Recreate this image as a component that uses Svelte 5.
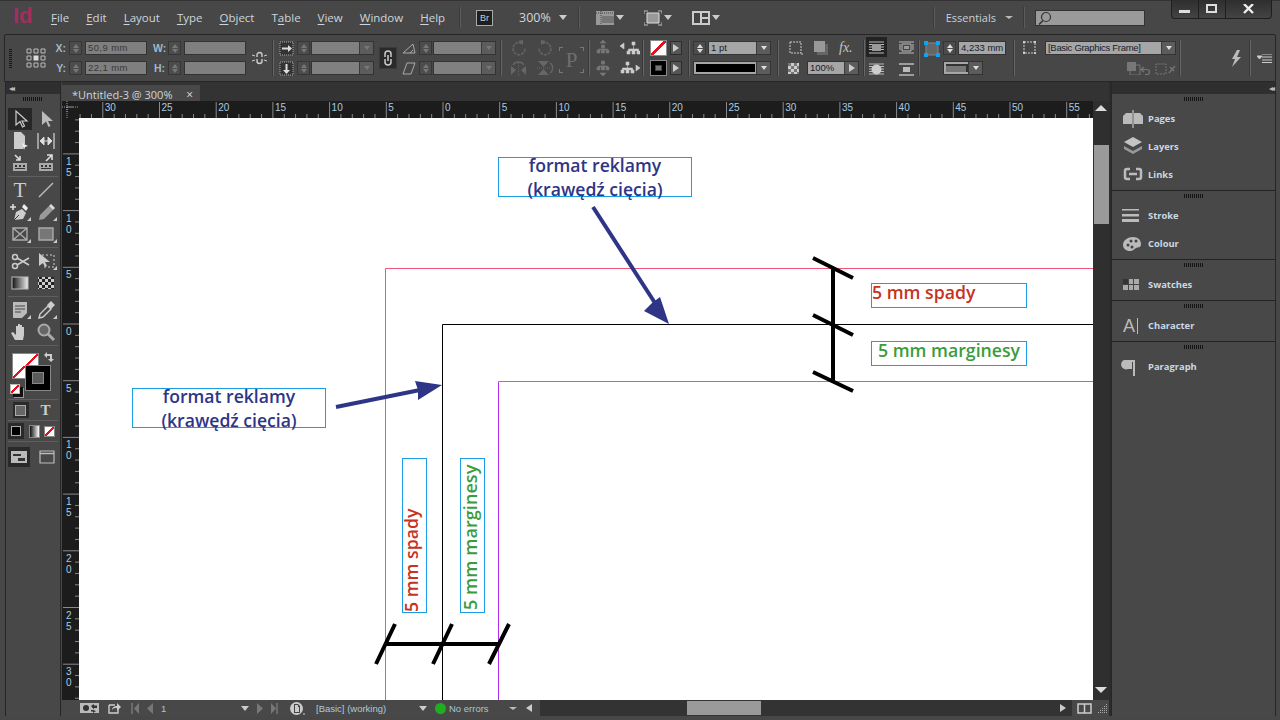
<script lang="ts">
  // accelerator letter sits in the middle: before, underlined, after
  const menus = [
    ['', 'F', 'ile'], ['', 'E', 'dit'], ['', 'L', 'ayout'], ['', 'T', 'ype'], ['', 'O', 'bject'],
    ['T', 'a', 'ble'], ['', 'V', 'iew'], ['', 'W', 'indow'], ['', 'H', 'elp'],
  ]

  // ruler ticks, 1 mm = 11.34 px, zero sits at the page corner
  const MM = 11.34
  const hTicks = Array.from({ length: 92 }, (_, i) => i - 33).map((mm) => ({
    mm,
    x: 381 + mm * MM,
    major: mm % 5 === 0,
  }))
  const vTicks = Array.from({ length: 52 }, (_, i) => i - 18).map((mm) => ({
    mm,
    y: 206 + mm * MM,
    major: mm % 5 === 0,
  }))

  const toolIcons: Record<string, string> = {
    select: '<path d="M6 2v14l4-3.5 2.5 5.5 2-1-2.5-5h5z" fill="none" stroke="#ccc" stroke-width="1.2"/>',
    direct: '<path d="M6 2v14l4-3.5 2.5 5.5 2-1-2.5-5h5z" fill="#bbb"/>',
    page: '<path d="M4 1h7l4 4v8h-2v5H4z" fill="#ccc"/><path d="M12 12l6 3-3 1-1 3z" fill="#eee"/>',
    gap: '<path d="M2 2v16M18 2v16" stroke="#bbb" stroke-width="1.5"/><path d="M4 10h12M4 10l4-4v8zM16 10l-4-4v8z" fill="#ddd" stroke="#ddd"/>',
    collect: '<path d="M3 10h14v8H3z" fill="#aaa"/><path d="M5 12h2v2H5zM9 12h2v2H9zM13 12h2v2h-2zM5 15h10v1H5z" fill="#333"/><path d="M5 2l5 5M10 3v4H6" stroke="#ddd" stroke-width="1.6" fill="none"/>',
    place: '<path d="M3 10h14v8H3z" fill="#aaa"/><path d="M5 12h2v2H5zM9 12h2v2H9zM13 12h2v2h-2zM5 15h10v1H5z" fill="#333"/><path d="M10 8l6-6M11 2h5v5" stroke="#ddd" stroke-width="1.6" fill="none"/>',
    line: '<path d="M3 17L17 3" stroke="#bbb" stroke-width="1.4"/>',
    pen: '<path d="M0 5h6M3 2v6" stroke="#ddd" stroke-width="1.6"/><path d="M4 18l2-8 6-3 4 4-3 6z" fill="#ccc"/><path d="M12 5l2-3 4 4-2 3z" fill="#eee"/><path d="M4 18l5-5" stroke="#333"/>',
    pencil: '<path d="M3 18l1-5 9-9 4 4-9 9z" fill="#999"/><path d="M13 4l2-2 4 4-2 2z" fill="#ddd"/>',
    framex: '<path d="M3 4h14v12H3zM3 4l14 12M17 4L3 16" fill="none" stroke="#aaa" stroke-width="1.4"/>',
    rect: '<path d="M3 4h14v12H3z" fill="#777" stroke="#aaa" stroke-width="1.4"/>',
    scissors: '<circle cx="5" cy="6" r="2.5" fill="none" stroke="#ccc" stroke-width="1.5"/><circle cx="5" cy="15" r="2.5" fill="none" stroke="#ccc" stroke-width="1.5"/><path d="M7 7l12 7M7 14l12-7" stroke="#ccc" stroke-width="1.6"/>',
    free: '<path d="M6 4h12v12H6" fill="none" stroke="#ccc" stroke-dasharray="2 2"/><path d="M3 2v13l4-3 2 4 2-1-2-4h5z" fill="#ccc"/>',
    grad: '<rect x="2" y="4" width="16" height="12" fill="url(#tg)" stroke="#bbb"/>',
    feather: '<rect x="2" y="4" width="16" height="12" fill="url(#tc)"/>',
    note: '<path d="M3 2h14v11l-5 5H3z" fill="#bbb"/><path d="M5 6h10M5 9h10M5 12h6" stroke="#444"/>',
    dropper: '<path d="M3 18l1-4 8-8 3 3-8 8z" fill="none" stroke="#ccc" stroke-width="1.4"/><path d="M11 5l4-4 4 4-4 4z" fill="#ccc"/>',
    hand: '<path d="M5 18l-4-7 2-1 3 3V4h2v6V2h2v8V3h2v7V5h2v8l-1 5z" fill="#ccc"/>',
    zoom: '<circle cx="8" cy="8" r="5.5" fill="#666" stroke="#aaa" stroke-width="2"/><path d="M12 12l6 6" stroke="#aaa" stroke-width="3"/>',
  }

  const toolRows = [
    [
      [['select', 'on'], ['direct']],
      [['page'], ['gap']],
      [['collect'], ['place']],
    ],
    [
      [['type'], ['line']],
      [['pen', 'fly'], ['pencil', 'fly']],
      [['framex', 'fly'], ['rect', 'fly']],
    ],
    [
      [['scissors'], ['free', 'fly']],
      [['grad'], ['feather']],
    ],
    [
      [['note', 'fly'], ['dropper', 'fly']],
      [['hand'], ['zoom']],
    ],
  ]

  const panels = [
    [
      { label: 'Pages', icon: '<path d="M2 8l3-3h6v11H2zM22 8l-3-3h-6v11h9z" fill="#bbb"/><path d="M12 2v18" stroke="#ddd"/>' },
      { label: 'Layers', icon: '<path d="M12 1l9 5-9 5-9-5z" fill="#c4c4c4"/><path d="M3 10l9 5 9-5v3l-9 5-9-5z" fill="#999"/>' },
      { label: 'Links', icon: '<path d="M9 5H6a2 2 0 0 0-2 2v6a2 2 0 0 0 2 2h3M15 5h3a2 2 0 0 1 2 2v6a2 2 0 0 1-2 2h-3M8 10h8" fill="none" stroke="#bbb" stroke-width="2.500"/>' },
    ],
    [
      { label: 'Stroke', icon: '<path d="M1 4h17v1.500H1zM1 9h17v2.500H1zM1 14h17v3H1z" fill="#bbb"/>' },
      { label: 'Colour', icon: '<path d="M2 12c0-5 5-8 10-8s8 3 8 7-3 3-5 4-3 3-6 3-7-2-7-6z" fill="#bbb"/><circle cx="7" cy="12" r="1.500" fill="#444"/><circle cx="10" cy="8" r="1.500" fill="#444"/><circle cx="15" cy="8" r="1.500" fill="#444"/><circle cx="11" cy="14" r="1.500" fill="#444"/>' },
    ],
    [{ label: 'Swatches', icon: '<path d="M2 5h16v11H2z" fill="#aaa"/><path d="M2 5h5.500v5.500H2z" fill="#333"/><path d="M2 10.500h16M7.500 5v11M12.500 5v11" stroke="#444"/>' }],
    [{ label: 'Character', icon: '<text x="2" y="17" class="glyph">A</text><path d="M16.500 3v16" stroke="#bbb"/>' }],
    [{ label: 'Paragraph', icon: '<path d="M3 4h11v16h-2V6h-1v7H7a4.500 4.500 0 0 1-4-9z" fill="#bbb"/>' }],
  ]
</script>

{#snippet spin(on = false)}
  <span class="spin" class:on><i class="up"></i><i class="down"></i></span>
{/snippet}

{#snippet pick(cls = '')}
  <span class="pick {cls}"><span class="pick-body"></span><span class="pick-arrow"><i class="down"></i></span></span>
{/snippet}

{#snippet ico(w: number, h: number, inner: string)}
  <svg class="ico" width={w} height={h} viewBox="0 0 {w} {h}">{@html inner}</svg>
{/snippet}

<div class="app">
  <header class="titlebar">
    <span class="logo">Id</span>
    <nav class="menu">
      {#each menus as m}
        <span>{m[0]}<u>{m[1]}</u>{m[2]}</span>
      {/each}
    </nav>
    <span class="tsep first"></span>
    <span class="br">Br</span>
    <span class="zoomval">300%</span>
    <i class="down big"></i>
    <span class="tsep"></span>
    <span class="view-ico">
      {@render ico(18, 16, '<path d="M0 1h18v14H0z" fill="#999"/><path d="M0 3h18M5 1v14" stroke="#444" stroke-dasharray="1 1"/><path d="M6 6h12v7H6z" fill="#777"/>')}
      <i class="down big"></i>
    </span>
    <span class="view-ico">
      {@render ico(18, 16, '<path d="M3 3h12v10H3z" fill="#999" stroke="#ddd"/><path d="M0 4V1h4M14 1h4v3M0 12v3h4M14 15h4v-3" fill="none" stroke="#bbb"/>')}
      <i class="down big"></i>
    </span>
    <span class="view-ico">
      {@render ico(18, 16, '<path d="M0 1h18v14H0z" fill="#ccc"/><path d="M2 3h6v10H2zM10 3h6v4h-6zM10 9h6v4h-6z" fill="#444"/>')}
      <i class="down big"></i>
    </span>
    <span class="spacer"></span>
    <span class="tsep"></span>
    <span class="workspace-name">Essentials</span>
    <i class="down small"></i>
    <span class="tsep"></span>
    <span class="search">
      {@render ico(14, 14, '<circle cx="8" cy="6" r="4.500" fill="none" stroke="#333" stroke-width="1.200"/><path d="M5 9.500L1 13.500" stroke="#333" stroke-width="1.500"/>')}
    </span>
    <span class="winbtns">
      <span>{@render ico(11, 10, '<path d="M0 6h11v3H0z" fill="#ddd"/>')}</span>
      <span>{@render ico(11, 10, '<path d="M1 1h9v7H1z" fill="none" stroke="#ddd" stroke-width="2"/>')}</span>
      <span class="close">{@render ico(11, 10, '<path d="M1 0l9 9M10 0L1 9" stroke="#eee" stroke-width="2.400"/>')}</span>
    </span>
  </header>

  <section class="controlbar">
    <div class="cell gripcell"><span class="vgrip"></span></div>
    <div class="cell refcell">
      {@render ico(20, 20, '<g fill="none" stroke="#bbb"><path d="M1 1h4v4H1zM8 1h4v4H8zM15 1h4v4h-4zM1 8h4v4H1zM15 8h4v4h-4zM1 15h4v4H1zM8 15h4v4H8zM15 15h4v4h-4z"/></g><path d="M7.500 7.500h5v5h-5z" fill="#ddd"/>')}
    </div>
    <div class="rows">
      <div class="row"><b class="lab">X:</b>{@render spin()}<span class="field dim w62">50,9 mm</span></div>
      <div class="row"><b class="lab">Y:</b>{@render spin()}<span class="field dim w62">22,1 mm</span></div>
    </div>
    <div class="rows">
      <div class="row"><b class="lab wide">W:</b>{@render spin()}<span class="field dim w62"></span></div>
      <div class="row"><b class="lab wide">H:</b>{@render spin()}<span class="field dim w62"></span></div>
    </div>
    <div class="cell linkcell">
      {@render ico(15, 14, '<path d="M5 6V4a2.500 2.500 0 0 1 5 0v2M5 8v2a2.500 2.500 0 0 0 5 0V8" fill="none" stroke="#ccc" stroke-width="1.400"/><path d="M0 4l3 1M0 10l3-1M15 4l-3 1M15 10l-3-1" stroke="#ccc"/>')}
    </div>
    <div class="sep"></div>
    <div class="rows">
      <div class="row tight">
        {@render ico(15, 15, '<path d="M1 1h13v13H1z" fill="#333" stroke="#aaa" stroke-dasharray="1 1"/><path d="M3 6.500h6v2H3zM9 4l4 3.500-4 3.500z" fill="#ddd"/>')}
        {@render spin()}{@render pick('w62 off')}
      </div>
      <div class="row tight">
        {@render ico(15, 15, '<path d="M1 1h13v13H1z" fill="#333" stroke="#aaa" stroke-dasharray="1 1"/><path d="M6.500 3h2v6h-2zM4 9l3.500 4L11 9z" fill="#ddd"/>')}
        {@render spin()}{@render pick('w62 off')}
      </div>
    </div>
    <div class="cell chaincell">
      <span class="chain">{@render ico(10, 16, '<path d="M2 7V4a3 3 0 0 1 6 0v3M2 9v3a3 3 0 0 0 6 0V9M5 5v6" fill="none" stroke="#ccc" stroke-width="1.500"/>')}</span>
    </div>
    <div class="rows">
      <div class="row tight">
        {@render ico(14, 14, '<path d="M1 12h12L11 3z" fill="none" stroke="#aaa"/><path d="M8 12l3-3" stroke="#aaa"/>')}
        {@render spin()}{@render pick('w62 off')}
      </div>
      <div class="row tight">
        {@render ico(14, 14, '<path d="M1 13L5 2h8L9 13z" fill="none" stroke="#aaa"/>')}
        {@render spin()}{@render pick('w62 off')}
      </div>
    </div>
    <div class="sep"></div>
    <div class="rows">
      <div class="row gap10">
        {@render ico(17, 16, '<path d="M12 3.500a6 6 0 1 0 3 4.500" fill="none" stroke="#666" stroke-width="1.500" stroke-dasharray="3 1"/><path d="M8 1l5-1v5z" fill="#666"/>')}
        {@render ico(17, 16, '<path d="M5 3.500a6 6 0 1 1-3 4.500" fill="none" stroke="#666" stroke-width="1.500" stroke-dasharray="3 1"/><path d="M9 1L4 0v5z" fill="#666"/>')}
      </div>
      <div class="row gap10">
        {@render ico(17, 16, '<path d="M1 6l5 4-5 5zM16 6l-5 4 5 5z" fill="#666"/><path d="M8.500 3v13" stroke="#666" stroke-dasharray="1 1"/><path d="M3 5a6 5 0 0 1 11 0" fill="none" stroke="#666" stroke-width="1.300"/>')}
        {@render ico(17, 16, '<path d="M1 1h11L6.500 7zM1 15h11L6.500 9z" fill="#666"/><path d="M0 8h13" stroke="#666" stroke-dasharray="1 1"/><path d="M13 3a6 6 0 0 1 0 10" fill="none" stroke="#666" stroke-width="1.300"/>')}
      </div>
    </div>
    <div class="cell pcell">
      <span class="pbox">P</span>
    </div>
    <div class="sep"></div>
    <div class="rows">
      <div class="row gap10">
        {@render ico(14, 16, '<path d="M7 0l3 3H4zM1 10h3v3H1zM5.500 10h3v3h-3zM10 10h3v3h-3zM5.500 5h3v3h-3zM7 8v2M2.500 10V9h9v1" fill="#777" stroke="#777" stroke-width=".6"/>')}
        {@render ico(20, 16, '<path d="M0 6l4-3v6zM12 2h3v3h-3zM7 11h3v3H7zM12 11h3v3h-3zM17 11h3v3h-3zM13.500 5v6M8.500 11V9h10v2" fill="#ccc" stroke="#ccc" stroke-width=".6"/>')}
      </div>
      <div class="row gap10">
        {@render ico(14, 16, '<path d="M7 16l3-3H4zM1 7h3v3H1zM5.500 7h3v3h-3zM10 7h3v3h-3zM5.500 1h3v3h-3zM7 4v3M2.500 7V6h9v1" fill="#777" stroke="#777" stroke-width=".6"/>')}
        {@render ico(20, 16, '<path d="M20 8l-4-3v6zM6 2h3v3H6zM1 10h3v3H1zM6 10h3v3H6zM11 10h3v3h-3zM7.500 5v5M2.500 10V8h10v2" fill="#ccc" stroke="#ccc" stroke-width=".6"/>')}
      </div>
    </div>
    <div class="sep"></div>
    <div class="rows">
      <div class="row gap3">
        <span class="swatch nofill"></span>
        <span class="flyout"><i class="right"></i></span>
      </div>
      <div class="row gap3">
        <span class="swatch strokeon"></span>
        <span class="flyout"><i class="right"></i></span>
      </div>
    </div>
    <div class="sep"></div>
    <div class="rows">
      <div class="row gap2">
        <span class="spin on"><i class="up"></i><i class="down"></i></span>
        <span class="pick light w62"><span class="pick-body">1 pt</span><span class="pick-arrow"><i class="down"></i></span></span>
      </div>
      <div class="row">
        <span class="pick light w78"><span class="pick-body"><span class="blackbar"></span></span><span class="pick-arrow"><i class="down"></i></span></span>
      </div>
    </div>
    <div class="sep"></div>
    <div class="rows">
      <div class="row gap13">
        {@render ico(14, 14, '<path d="M1 1h11v11H1z" fill="none" stroke="#ccc" stroke-dasharray="2 1"/><path d="M12 13h2" stroke="#ccc"/>')}
        {@render ico(14, 14, '<path d="M3 3h11v11H3z" fill="#666"/><path d="M0 0h11v11H0z" fill="#999"/>')}
        <span class="fx">fx.</span>
      </div>
      <div class="row opac">
        {@render ico(11, 11, '<path d="M0 0h11v11H0z" fill="#ccc"/><path d="M0 0h3v3H0zM6 0h3v3H6zM3 3h3v3H3zM9 3h2v3H9zM0 6h3v3H0zM6 6h3v3H6zM3 9h3v2H3zM9 9h2v2H9z" fill="#777"/>')}
        <span class="pick light w52"><span class="pick-body">100%</span><span class="pick-arrow"><i class="right white"></i></span></span>
      </div>
    </div>
    <div class="sep"></div>
    <div class="wrapgrid">
      <span class="wrapbtn on">{@render ico(15, 13, '<path d="M0 1h15M0 12h15M0 3.500h15M0 6h15M0 8.500h15" stroke="#bbb"/><path d="M3 3h9v7H3z" fill="#999"/>')}</span>
      <span class="wrapbtn">{@render ico(15, 13, '<path d="M0 1h15M0 12h15" stroke="#bbb"/><path d="M3 3h9v7H3z" fill="none" stroke="#bbb"/><path d="M0 4h2M0 6h2M0 8h2M13 4h2M13 6h2M13 8h2" stroke="#bbb"/><path d="M5 5h5v3H5z" fill="#999"/>')}</span>
      <span class="wrapbtn">{@render ico(15, 13, '<path d="M0 1h15M0 3.500h15M0 6h15M0 8.500h15M0 11h15" stroke="#bbb"/><circle cx="7.500" cy="6.500" r="5" fill="#ccc"/>')}</span>
      <span class="wrapbtn">{@render ico(15, 13, '<path d="M0 1h15M0 12h15" stroke="#bbb" stroke-width="1.500"/><path d="M4 4h7v5H4z" fill="#bbb"/>')}</span>
    </div>
    <div class="sep"></div>
    <div class="cell cornercell">
      {@render ico(16, 16, '<path d="M2 2h12v12H2z" fill="#666" stroke="#888"/><path d="M0 0h4v4H0zM12 0h4v4h-4zM0 12h4v4H0zM12 12h4v4h-4z" fill="#0aa5f5"/>')}
    </div>
    <div class="rows">
      <div class="row gap2">
        {@render spin(true)}
        <span class="field light w47">4,233 mm</span>
      </div>
      <div class="row">
        <span class="pick corner"><span class="pick-body"><span class="cornerline"></span></span><span class="pick-arrow"><i class="down"></i></span></span>
      </div>
    </div>
    <div class="sep"></div>
    <div class="rows">
      <div class="row gap8">
        {@render ico(14, 14, '<path d="M1 1h11v11H1z" fill="none" stroke="#ccc" stroke-dasharray="2 1"/><path d="M0 0h2v2H0zM11 0h2v2h-2zM0 11h2v2H0zM11 11h2v2h-2z" fill="#ccc"/>')}
        <span class="pick light style"><span class="pick-body">[Basic Graphics Frame]</span><span class="pick-arrow"><i class="down"></i></span></span>
      </div>
      <div class="row styleicons">
        {@render ico(24, 13, '<path d="M4 3h10v10H4z" fill="none" stroke="#777"/><path d="M1 0h9v9H1z" fill="#777"/><path d="M18 5l-3 2.500 3 2.500M15 7.500h6a2 2 0 0 1 0 5h-2" fill="none" stroke="#777" stroke-width="1.200"/>')}
        {@render ico(21, 13, '<path d="M1 2h10v10H1z" fill="none" stroke="#777" stroke-dasharray="2 1"/><path d="M14 11l6-7M15 5l4 4" stroke="#777" stroke-width="1.200"/>')}
      </div>
    </div>
    <div class="sep"></div>
    <div class="cell boltcell">
      {@render ico(11, 17, '<path d="M6 0L1 9h3l-3 8 9-10H6l3-7z" fill="#bbb"/>')}
    </div>
    <div class="sep"></div>
    <div class="cell menucell">
      {@render ico(15, 9, '<path d="M0 2h5L2.500 5zM5 0h10M5 3h10M5 6h10M5 8.500h10" fill="#ccc" stroke="#ccc"/>')}
    </div>
  </section>

  <main class="workspace">
    <aside class="tools">
      <div class="panelhead"><span class="collapse">◂◂</span></div>
      <span class="hgrip"></span>
      {#each toolRows as group, g}
        {#if g > 0}<div class="tool-sep"></div>{/if}
        {#each group as row}
          <div class="tool-row">
            {#each row as t}
              <span class="tool" class:on={t[1] === 'on'} class:fly={t[1] === 'fly'}>
                {#if t[0] === 'type'}
                  <span class="type-t">T</span>
                {:else}
                  <svg width="20" height="20" viewBox="0 0 20 20">
                    <defs>
                      <linearGradient id="tg"><stop offset="0" stop-color="#111" /><stop offset="1" stop-color="#eee" /></linearGradient>
                      <pattern id="tc" width="6" height="6" patternUnits="userSpaceOnUse"><rect width="6" height="6" fill="#ccc" /><rect width="3" height="3" fill="#222" /><rect x="3" y="3" width="3" height="3" fill="#222" /></pattern>
                    </defs>
                    {@html toolIcons[t[0]]}
                  </svg>
                {/if}
              </span>
            {/each}
          </div>
        {/each}
      {/each}
      <div class="tool-sep"></div>
      <div class="fillstroke">
        <span class="fs-fill"></span>
        <span class="fs-stroke"><span></span></span>
        <svg class="fs-swap" width="12" height="12" viewBox="0 0 12 12"><path d="M1 4l3-3v2h5v5h2l-3 3-3-3h2V5H4v2z" fill="#ccc" /></svg>
        <span class="fs-default"></span>
      </div>
      <div class="tool-sep"></div>
      <div class="fmt-row">
        <span class="fmt on"><span class="fmt-box"></span></span>
        <span class="fmt"><span class="type-t small">T</span></span>
      </div>
      <div class="tool-sep"></div>
      <div class="apply-row">
        <span class="apply on"><span></span></span>
        <span class="apply-grad"></span>
        <span class="apply-none"></span>
      </div>
      <div class="tool-sep"></div>
      <div class="mode-row">
        <span class="mode on">{@render ico(16, 12, '<path d="M0 0h16v12H0z" fill="#bbb"/><path d="M2 3h8v2H2zM7 7h7v3H7z" fill="#333"/>')}</span>
        <span class="mode">{@render ico(16, 14, '<path d="M1 1h14v12H1z" fill="none" stroke="#bbb" stroke-width="1.200"/><path d="M1 3.500h14" stroke="#bbb" stroke-width="1.500"/>')}</span>
      </div>
    </aside>

    <div class="doc">
      <div class="tabstrip">
        <span class="tab">*Untitled-3 @ 300% <span class="tab-x">×</span></span>
      </div>
      <div class="docgrid">
        <div class="corner-box">
          <svg width="17" height="17"><path d="M5 0v12M0 6h12" stroke="#999" stroke-dasharray="1 1" /><path d="M5 6h12M5 6v11" stroke="#999" stroke-dasharray="1 1" /></svg>
        </div>
        <svg class="hruler" width="1014" height="17" viewBox="17 0 1014 17">
          {#each hTicks as t}
            <line x1={t.x} x2={t.x} y1={t.major ? 1 : 13} y2="17" stroke="#8a8a8a" />
            {#if t.major}<text x={t.x + 2} y="10" class="rtext">{Math.abs(t.mm)}</text>{/if}
          {/each}
        </svg>
        <div class="vscroll">
          <span class="sarrow"><i class="up white"></i></span>
          <span class="vthumb"></span>
          <span class="sarrow bottom"><i class="down white"></i></span>
        </div>
        <svg class="vruler" width="17" height="582">
          {#each vTicks as t}
            <line x1={t.major ? 1 : 13} x2="17" y1={t.y} y2={t.y} stroke="#8a8a8a" />
            {#if t.major}
              {#each String(Math.abs(t.mm)).split('') as d, i}
                <text x="4" y={t.y + 11 + i * 11} class="rtext">{d}</text>
              {/each}
            {/if}
          {/each}
        </svg>
        <div class="page">
          <svg class="art" width="1014" height="582" viewBox="79 118 1014 582">
            <path d="M385.500 700V268.500H1093" class="bleed" />
            <path d="M442.500 700V324.500H1093" class="trim" />
            <path d="M498.500 700V381.500" class="margin" />
            <path d="M498.500 381.500H1093" class="margin-top" />
            <g class="dim">
              <path d="M385 644H498" />
              <path d="M376 664L395 624M433 664L452 624M489 664L509 624" />
              <path d="M833 268V382" />
              <path d="M813 258L853 278M813 315L853 335M813 372L853 391" />
            </g>
            <path d="M593 207L655 303" class="leader" />
            <path d="M669 324L644 311L652 303L660 297Z" class="head" />
            <path d="M336 407L420 390" class="leader" />
            <path d="M442 385L415 381L418 390L418 400Z" class="head" />
          </svg>
          <div class="frame note top"><div>format reklamy<br />(krawędź cięcia)</div></div>
          <div class="frame note left"><div>format reklamy<br />(krawędź cięcia)</div></div>
          <div class="frame label red hbleed">5 mm spady</div>
          <div class="frame label green hmargin">5 mm marginesy</div>
          <div class="frame vlabel red vbleed">5 mm spady</div>
          <div class="frame vlabel green vmargin">5 mm marginesy</div>
        </div>
      </div>
      <footer class="status">
        <span class="st-gear">{@render ico(19, 12, '<path d="M0 1h19v10H0z" fill="#bbb" rx="2"/><circle cx="6" cy="6" r="3" fill="#333"/><path d="M11 4l3-2v1.500h3V6h-3v1.500zM16 9l-3 2V9.500h-2V8h2z" fill="#333"/>')}</span>
        <span class="st-share">{@render ico(13, 12, '<path d="M1 3h6M1 3v8h9V7" fill="none" stroke="#ccc" stroke-width="1.400"/><path d="M4 8c0-3 3-4 5-4V1l4 4-4 4V6C7 6 5 6 4 8z" fill="#ccc"/>')}</span>
        <span class="st-nav">
          {@render ico(8, 11, '<path d="M1 0v11" stroke="#777" stroke-width="1.500"/><path d="M8 0v11L3 5.500z" fill="#777"/>')}
          {@render ico(7, 11, '<path d="M7 0v11L1 5.500z" fill="#777"/>')}
        </span>
        <span class="st-page">1</span>
        <i class="down big st-pagearrow"></i>
        <span class="st-nav2">
          {@render ico(6, 11, '<path d="M0 0v11l6-5.500z" fill="#777"/>')}
          {@render ico(7, 11, '<path d="M0 0v11l5-5.500z" fill="#777"/><path d="M6 0v11" stroke="#777" stroke-width="1.500"/>')}
        </span>
        <span class="st-doc">{@render ico(15, 13, '<circle cx="6.500" cy="6.500" r="6.500" fill="#ccc"/><path d="M4 2h4l2 2v7H4z" fill="#444"/><path d="M5 3h3v2h1v5H5z" fill="#ccc"/><path d="M13 12h2" stroke="#ccc"/>')}</span>
        <span class="st-profile">[Basic] (working)</span>
        <i class="down big st-profarrow"></i>
        <span class="st-dot"></span>
        <span class="st-errors">No errors</span>
        <i class="down small st-errarrow"></i>
        <span class="st-left"><i class="left white"></i></span>
        <span class="hscroll"><span class="hthumb"></span></span>
        <span class="st-right"><i class="right white"></i></span>
        <span class="st-split">
          {@render ico(15, 11, '<path d="M1 1h13v9H1z" fill="none" stroke="#ccc" stroke-width="1.500"/><path d="M7.500 1v9" stroke="#ccc" stroke-width="1.500"/>')}
        </span>
        <span class="st-grip">
          {@render ico(11, 11, '<path d="M9 1h1v1H9zM7 3h1v1H7zM9 3h1v1H9zM5 5h1v1H5zM7 5h1v1H7zM9 5h1v1H9zM3 7h1v1H3zM5 7h1v1H5zM7 7h1v1H7zM9 7h1v1H9zM1 9h1v1H1zM3 9h1v1H3zM5 9h1v1H5zM7 9h1v1H7zM9 9h1v1H9z" fill="#aaa"/>')}
        </span>
      </footer>
    </div>

    <div class="gutter"></div>

    <aside class="panels">
      <div class="panelhead right"><span class="collapse">◂◂</span></div>
      {#each panels as group}
        <section class="dock">
          <span class="hgrip"></span>
          {#each group as p}
            <div class="dock-item">
              <svg width="26" height="20" viewBox="0 0 26 20">{@html p.icon}</svg>
              <span>{p.label}</span>
            </div>
          {/each}
        </section>
      {/each}
    </aside>
  </main>
</div>

<style>
  :global(body) {
    margin: 0;
    background: #484848;
  }

  .app {
    width: 1280px;
    height: 720px;
    overflow: hidden;
    display: flex;
    flex-direction: column;
    background: #474747;
    font-family: "Open Sans", "Liberation Sans", sans-serif;
    color: #d4dde4;
  }

  i {
    display: block;
    flex: none;
    width: 0;
    height: 0;
  }
  i.down { border: 3.5px solid transparent; border-top: 4px solid #777; border-bottom: 0; }
  i.up { border: 3.5px solid transparent; border-bottom: 4px solid #777; border-top: 0; }
  i.right { border: 4px solid transparent; border-left: 6px solid #ccc; border-right: 0; }
  i.left { border: 4px solid transparent; border-right: 6px solid #ccc; border-left: 0; }
  i.white.up { border-bottom-color: #ddd; border-width: 0 6px 6px; border-left-color: transparent; border-right-color: transparent; }
  i.white.down { border-top-color: #ddd; border-width: 6px 6px 0; border-left-color: transparent; border-right-color: transparent; }
  i.big { border-width: 5px 4px 0; border-top-color: #ccc; border-left-color: transparent; border-right-color: transparent; border-style: solid; }
  i.small { border-width: 3px 4px 0; border-top-color: #bbb; border-left-color: transparent; border-right-color: transparent; border-style: solid; }

  .ico { display: block; flex: none; }

  /* title bar */
  .titlebar {
    flex: none;
    height: 34px;
    display: flex;
    align-items: center;
    position: relative;
    border-top: 1px solid #333;
    box-sizing: border-box;
  }
  .logo {
    width: 51px;
    padding-left: 13px;
    box-sizing: border-box;
    font: bold 22px "Liberation Sans", sans-serif;
    color: #a32e5e;
    margin-top: -3px;
  }
  .menu {
    display: flex;
    gap: 17px;
    font-size: 11.500px;
    width: 403px;
    color: #ccd6de;
  }
  .menu u { text-underline-offset: 2px; }
  .tsep {
    width: 1px;
    height: 21px;
    background: #5c5c5c;
    box-shadow: -1px 0 #3a3a3a;
  }
  .first { margin-left: 6px; }
  .br {
    width: 15px;
    height: 14px;
    margin-left: 15px;
    border: 1px solid #aaa;
    background: #1f1f1f;
    font: 9px "Liberation Sans", sans-serif;
    line-height: 14px;
    text-align: center;
    color: #ccc;
  }
  .zoomval {
    margin-left: 26px;
    margin-right: 8px;
    font-size: 12.500px;
    color: #ccd6de;
  }
  .titlebar > i.big { margin-right: 12px; }
  .view-ico {
    display: flex;
    align-items: center;
    gap: 2px;
    margin-left: 16px;
    margin-right: 6px;
    width: 26px;
  }
  .spacer { flex: 1; }
  .workspace-name {
    margin-left: 11px;
    margin-right: 9px;
    font-size: 11px;
    color: #c6d2da;
  }
  .titlebar > i.small { margin-right: 11px; }
  .search {
    width: 110px;
    height: 16px;
    margin-left: 10px;
    margin-right: 26px;
    background: #9a9a9a;
    border: 1px solid #333;
    box-sizing: border-box;
    display: flex;
    align-items: center;
    padding-left: 2px;
  }
  .winbtns {
    align-self: flex-start;
    margin-top: -1px;
    margin-right: 8px;
    width: 101px;
    height: 19px;
    display: flex;
    border: 1px solid #1f1f1f;
    border-top: 0;
    border-radius: 0 0 4px 4px;
    box-sizing: border-box;
    background: linear-gradient(#2e2e2e, #444);
  }
  .winbtns span {
    flex: 1;
    display: flex;
    align-items: center;
    justify-content: center;
    border-right: 1px solid #1f1f1f;
  }
  .winbtns .close { flex: 1.750; border: 0; }

  /* control bar */
  .controlbar {
    flex: none;
    height: 48px;
    margin: 0 4px 0 4px;
    box-sizing: border-box;
    border: 1px solid #262626;
    border-radius: 2px 2px 0 0;
    display: grid;
    grid-template-columns: 19px 30px 96px 99px 22px 6px 99px 24px 99px 8px 49px 31px 6px 48px 7px 39px 6px 83px 10px 76px 4px 51px 5px 21px 69px 8px 158px 8px 62px 6px 1fr;
    font: 9.500px "Liberation Sans", sans-serif;
    color: #333;
  }
  .cell { display: flex; align-items: center; }
  .gripcell { padding-left: 4px; }
  .vgrip {
    width: 3px;
    height: 19px;
    background: repeating-linear-gradient(#151515 0 1px, #484848 1px 2px);
  }
  .refcell { padding-left: 2px; }
  .linkcell { padding-left: 3px; }
  .chaincell { padding-left: 3px; }
  .chain {
    display: flex;
    align-items: center;
    justify-content: center;
    width: 18px;
    height: 22px;
    background: #2a2a2a;
    border: 1px solid #3a3a3a;
    box-sizing: border-box;
  }
  .boltcell { padding-left: 45px; }
  .menucell { padding-left: 3px; }
  .cornercell { padding-left: 2px; align-items: flex-start; padding-top: 6px; }
  .rows {
    display: flex;
    flex-direction: column;
    gap: 6px;
    padding-top: 6px;
  }
  .row {
    display: flex;
    align-items: center;
    height: 14px;
    gap: 3px;
  }
  .row.tight { gap: 3px; padding-left: 2px; }
  .row.tight .spin { margin-right: -2px; }
  .row.gap10 { gap: 10px; padding-left: 3px; }
  .row.gap3 { gap: 3px; padding-left: 2px; }
  .row.gap2 { gap: 2px; }
  .row.gap13 { gap: 11px; padding-left: 3px; }
  .row.gap8 { gap: 8px; padding-left: 3px; }
  .opac { gap: 8px; padding-left: 2px; }
  .styleicons { justify-content: flex-end; gap: 5px; padding-right: 2px; }
  .lab {
    width: 12px;
    font-size: 10.500px;
    color: #9fb8cc;
    font-weight: 700;
    text-align: right;
  }
  .lab.wide { width: 12px; margin-left: 3px; }
  .spin {
    flex: none;
    width: 13px;
    height: 14px;
    box-sizing: border-box;
    background: #4c4c4c;
    border: 1px solid #363636;
    display: flex;
    flex-direction: column;
    align-items: center;
    justify-content: center;
    gap: 1px;
  }
  .spin.on i.up { border-bottom-color: #ddd; }
  .spin.on i.down { border-top-color: #ddd; }
  .field {
    box-sizing: border-box;
    height: 14px;
    line-height: 12px;
    padding-left: 2px;
    border: 1px solid #333;
    white-space: nowrap;
  }
  .field.dim { background: #7f7f7f; color: #393939; letter-spacing: .4px; }
  .field.light { background: #a6a6a6; color: #16212c; }
  .w62 { width: 62px; }
  .w47 { width: 48px; }
  .pick {
    display: flex;
    box-sizing: border-box;
    height: 14px;
    border: 1px solid #333;
    line-height: 12px;
  }
  .pick-body { flex: 1; background: #808080; padding-left: 2px; overflow: hidden; white-space: nowrap; }
  .pick-arrow {
    width: 13px;
    background: #5c5c5c;
    border-left: 1px solid #3a3a3a;
    display: flex;
    align-items: center;
    justify-content: center;
  }
  .pick.light .pick-body, .pick.corner .pick-body { background: #a6a6a6; color: #16212c; }
  .pick.light .pick-arrow i.down, .pick.corner .pick-arrow i.down { border-top-color: #ddd; }
  .pick.w78 { width: 78px; margin-left: 0; }
  .pick.w52 { width: 52px; }
  .pick.w62 { width: 63px; }
  .pick.style { width: 131px; letter-spacing: -.3px; }
  .pick.corner { width: 40px; }
  .blackbar { display: block; height: 8px; margin-top: 2px; width: 59px; background: #000; }
  .cornerline { display: block; width: 20px; height: 6px; margin-top: 2px; border: solid #333; border-width: 2px 2px 0 0; background: #777; }
  .swatch {
    width: 17px;
    height: 16px;
    box-sizing: border-box;
    border: 1px solid #8a8a8a;
    background: #fff;
  }
  .nofill { background: linear-gradient(to top left, #fff 43%, #e8101e 43%, #e8101e 57%, #fff 57%); }
  .strokeon {
    background: #000;
    position: relative;
  }
  .strokeon::after {
    content: '';
    position: absolute;
    inset: 4px;
    background: #777;
    border: 1px solid #444;
  }
  .flyout {
    width: 12px;
    height: 14px;
    box-sizing: border-box;
    background: #555;
    border: 1px solid #2e2e2e;
    display: flex;
    align-items: center;
    justify-content: center;
  }
  .fx {
    font: italic 14px "Liberation Serif", serif;
    color: #c4c4c4;
    line-height: 14px;
  }
  .pbox {
    width: 25px;
    height: 26px;
    margin: 12px 0 0 3px;
    color: #6f6f6f;
    font: 21px/26px "Liberation Serif", serif;
    text-align: center;
    background:
      linear-gradient(#777, #777) 0 0 / 4px 1px no-repeat,
      linear-gradient(#777, #777) 0 0 / 1px 4px no-repeat,
      linear-gradient(#777, #777) 100% 0 / 4px 1px no-repeat,
      linear-gradient(#777, #777) 100% 0 / 1px 4px no-repeat,
      linear-gradient(#777, #777) 0 100% / 4px 1px no-repeat,
      linear-gradient(#777, #777) 0 100% / 1px 4px no-repeat,
      linear-gradient(#777, #777) 100% 100% / 4px 1px no-repeat,
      linear-gradient(#777, #777) 100% 100% / 1px 4px no-repeat;
  }
  .pcell { align-items: flex-start; }
  .sep {
    position: relative;
    margin-top: 5px;
    height: 36px;
  }
  .sep::after {
    content: '';
    position: absolute;
    left: 2px;
    width: 1px;
    height: 100%;
    background: #666;
    box-shadow: -1px 0 #383838;
  }
  .wrapgrid {
    display: grid;
    grid-template-columns: 21px 21px;
    gap: 0 9px;
    grid-auto-rows: 22px;
    padding-top: 1px;
    justify-items: center;
    align-items: center;
  }
  .wrapbtn { width: 21px; height: 20px; display: flex; align-items: center; justify-content: center; }
  .wrapbtn.on { background: #232323; }

  /* workspace */
  .workspace {
    flex: 1;
    min-height: 0;
    display: flex;
    padding-bottom: 4px;
  }
  .tools {
    flex: none;
    width: 56px;
    margin-left: 5px;
    margin-right: 1px;
    background: #484848;
    border: solid #262626;
    border-width: 0 1px;
    box-sizing: border-box;
    display: flex;
    flex-direction: column;
    align-items: stretch;
  }
  .panelhead {
    flex: none;
    height: 12px;
    background: #2f2f2f;
    color: #bbb;
    font-size: 8px;
    line-height: 12px;
    padding-left: 3px;
  }
  .panelhead.right { text-align: right; padding-right: 2px; }
  .collapse { letter-spacing: -2px; font-family: "DejaVu Sans", sans-serif; }
  .hgrip {
    flex: none;
    display: block;
    width: 20px;
    height: 4px;
    margin: 3px auto 0;
    background: repeating-linear-gradient(90deg, #151515 0 1px, #484848 1px 2px);
  }
  .tool-row {
    display: flex;
    justify-content: space-between;
    padding: 0 2px;
    height: 22px;
    flex: none;
  }
  .tools > .hgrip + .tool-row { margin-top: 7px; }
  .tool {
    width: 24px;
    height: 22px;
    display: flex;
    align-items: center;
    justify-content: center;
    position: relative;
  }
  .tool.on { background: #272727; }
  .tool.fly::after {
    content: '';
    position: absolute;
    right: 1px;
    bottom: 2px;
    border: 2px solid #ccc;
    border-top-color: transparent;
    border-left-color: transparent;
  }
  .type-t {
    font: 21px/20px "Liberation Serif", serif;
    color: #ccc;
  }
  .type-t.small { font-size: 15px; font-weight: bold; }
  .tool-sep {
    flex: none;
    height: 1px;
    margin: 2px 2px;
    background: #5f5f5f;
  }
  .fillstroke {
    position: relative;
    flex: none;
    height: 49px;
  }
  .fs-fill {
    position: absolute;
    left: 6px;
    top: 5px;
    width: 27px;
    height: 26px;
    box-sizing: border-box;
    border: 1px solid #888;
    background: linear-gradient(to top left, #fff 47%, #e8101e 47%, #e8101e 53%, #fff 53%);
  }
  .fs-stroke {
    position: absolute;
    left: 19px;
    top: 17px;
    width: 26px;
    height: 26px;
    box-sizing: border-box;
    border: 1px solid #888;
    background: #000;
    padding: 6px;
  }
  .fs-stroke span {
    display: block;
    width: 100%;
    height: 100%;
    box-sizing: border-box;
    border: 1px solid #888;
    background: #5a5a5a;
  }
  .fs-swap { position: absolute; left: 37px; top: 3px; }
  .fs-default {
    position: absolute;
    left: 4px;
    top: 36px;
    width: 8px;
    height: 8px;
    border: 1px solid #bbb;
    background: linear-gradient(to top left, #fff 42%, #e8101e 42%, #e8101e 58%, #fff 58%);
    box-shadow: 3px 3px 0 #111, 4px 4px 0 #999;
  }
  .fmt-row { display: flex; justify-content: space-around; height: 16px; flex: none; padding: 0 2px; }
  .fmt { width: 16px; height: 16px; display: flex; align-items: center; justify-content: center; }
  .fmt.on { background: #2a2a2a; }
  .fmt-box { width: 9px; height: 9px; background: #666; border: 1px solid #aaa; }
  .apply-row { display: flex; align-items: center; justify-content: space-between; height: 16px; flex: none; padding: 0 5px 0 2px; }
  .apply { width: 16px; height: 16px; display: flex; align-items: center; justify-content: center; background: #2a2a2a; }
  .apply span { width: 8px; height: 8px; background: #000; border: 1px solid #aaa; }
  .apply-grad { width: 9px; height: 11px; background: linear-gradient(90deg, #111, #fff); border: 1px solid #888; }
  .apply-none { width: 9px; height: 9px; border: 1px solid #888; background: linear-gradient(to top left, #fff 42%, #e8101e 42%, #e8101e 58%, #fff 58%); }
  .mode-row { display: flex; align-items: center; gap: 7px; height: 20px; flex: none; padding: 1px 2px; margin-top: 2px; }
  .mode { width: 24px; height: 20px; display: flex; align-items: center; justify-content: center; }
  .mode.on { background: #2a2a2a; }

  /* document */
  .doc {
    flex: none;
    width: 1047px;
    display: flex;
    flex-direction: column;
  }
  .tabstrip {
    flex: none;
    height: 19px;
    background: #333;
  }
  .tab {
    display: inline-block;
    width: 138px;
    height: 19px;
    box-sizing: border-box;
    padding-left: 10px;
    background: #484848;
    font-size: 11px;
    line-height: 19px;
    color: #cbd6de;
    white-space: nowrap;
  }
  .tab-x { margin-left: 11px; font-size: 12px; color: #ddd; }
  .docgrid {
    flex: 1;
    min-height: 0;
    display: grid;
    grid-template-columns: 17px 1014px 16px;
    grid-template-rows: 17px 582px;
    background: #1c1c1c;
  }
  .corner-box { background: #1c1c1c; height: 17px; }
  .hruler, .vruler { display: block; background: #1c1c1c; }
  .rtext {
    font: 10px "Liberation Sans", sans-serif;
    fill: #a9cbe2;
  }
  .vscroll {
    grid-column: 3;
    grid-row: 1 / 3;
    background: #2f2f2f;
    position: relative;
    display: flex;
    flex-direction: column;
    align-items: center;
  }
  .sarrow { height: 16px; padding-top: 4px; box-sizing: border-box; }
  .sarrow.bottom { margin-top: auto; padding-top: 4px; height: 17px; }
  .vthumb {
    margin-top: 28px;
    width: 15px;
    height: 79px;
    background: #9a9a9a;
  }
  .page {
    position: relative;
    background: #fff;
    overflow: hidden;
    font-family: "Open Sans", sans-serif;
  }
  .art { position: absolute; inset: 0; }
  .art path { fill: none; }
  .bleed { stroke: #f2557a; }
  .trim { stroke: #000; }
  .margin { stroke: #b32ef0; }
  .margin-top { stroke: #d84be8; }
  .dim path { stroke: #000; stroke-width: 4; }
  .art .leader { stroke: #2e3586; stroke-width: 4; }
  .art .head { fill: #2e3586; }
  .frame {
    position: absolute;
    box-sizing: border-box;
    border: 1px solid #1b9ce6;
    white-space: nowrap;
    font-weight: 600;
  }
  .note {
    width: 194px;
    height: 40px;
    display: flex;
    flex-direction: column;
    justify-content: center;
    text-align: center;
    font-size: 17.600px;
    line-height: 24px;
    color: #2e3586;
  }
  .top { left: 419px; top: 39px; }
  .left { left: 53px; top: 270px; }
  .label {
    width: 156px;
    height: 25px;
    font-size: 17.700px;
    line-height: 17px;
  }
  .red { color: #c8321e; }
  .green { color: #3b9c3b; }
  .hbleed { left: 792px; top: 165px; padding-left: 0; }
  .hmargin { left: 792px; top: 223px; padding-left: 6px; }
  .vlabel {
    width: 25px;
    height: 155px;
    writing-mode: vertical-rl;
    transform: rotate(180deg);
    font-size: 17.700px;
  }
  .vbleed { left: 323px; top: 340px; line-height: 16px; }
  .vmargin { left: 381px; top: 340px; padding-top: 2px; line-height: 18px; font-size: 18.100px; }

  /* status bar */
  .status {
    flex: none;
    height: 16px;
    display: flex;
    align-items: center;
    background: #484848;
    font: 9.500px "Liberation Sans", sans-serif;
    color: #aac4d6;
  }
  .st-gear { margin-left: 18px; }
  .st-share { margin-left: 9px; }
  .st-nav, .st-nav2 { display: flex; gap: 7px; }
  .st-nav { margin-left: 10px; }
  .st-page { margin-left: 8px; width: 80px; }
  .st-pagearrow { margin-right: 8px; }
  .st-nav2 { gap: 8px; }
  .st-doc { margin-left: 12px; }
  .st-profile { margin-left: 11px; width: 103px; color: #b0c8d8; }
  .st-profarrow { margin-right: 8px; }
  .st-dot { width: 11px; height: 11px; border-radius: 50%; background: #1fae1f; }
  .st-errors { margin-left: 3px; width: 60px; }
  .st-errarrow { margin-right: 8px; }
  .st-left { margin-left: 1px; width: 14px; }
  .hscroll {
    width: 517px;
    height: 16px;
    background: #333;
    position: relative;
  }
  .hthumb {
    position: absolute;
    left: 147px;
    top: 1px;
    width: 74px;
    height: 14px;
    background: #9a9a9a;
  }
  .st-right {
    width: 15px;
    height: 16px;
    box-sizing: border-box;
    padding: 4px 0 0 3px;
    background: #333;
  }
  .st-split { margin-left: 5px; }
  .st-grip { margin-left: 5px; }
  .gutter {
    flex: none;
    width: 2px;
    background: #2c2c2c;
  }
  .panels {
    flex: none;
    width: 165px;
    margin-right: 4px;
    background: #484848;
    border: solid #262626;
    border-width: 0 1px;
    box-sizing: border-box;
  }
  .dock {
    border-bottom: 1px solid #222;
    padding-bottom: 2px;
  }
  .dock:last-child { border-bottom: 0; }
  .dock-item {
    display: flex;
    align-items: center;
    height: 28px;
    padding-left: 9px;
    gap: 0;
    font: 700 9.400px "Open Sans", sans-serif;
    color: #cbd9e4;
  }
  .dock .hgrip + .dock-item { margin-top: 3px; }
  .dock-item svg { margin-right: 1px; overflow: visible; }
  .dock-item :global(.glyph) {
    font: 18px "Liberation Sans", sans-serif;
    fill: #bbb;
  }
</style>
